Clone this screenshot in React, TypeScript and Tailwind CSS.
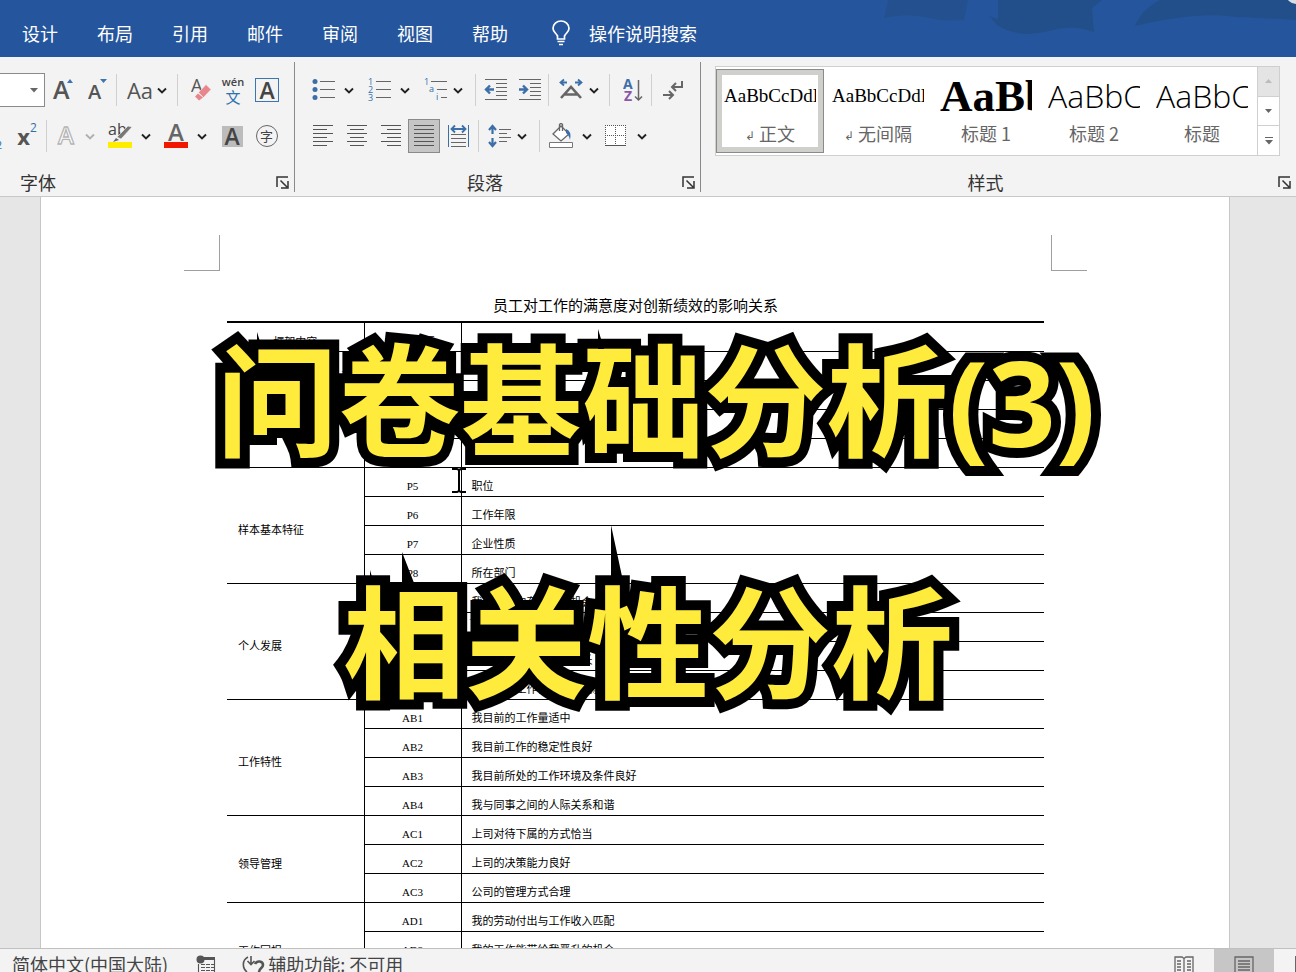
import React from "react";

const TABS = ["设计", "布局", "引用", "邮件", "审阅", "视图", "帮助"];

type Group = { label: string; rows: [string, string][] };

const GROUPS: Group[] = [
  { label: "", rows: [["", ""], ["", ""], ["", ""], ["", ""]] },
  {
    label: "样本基本特征",
    rows: [["P5", "职位"], ["P6", "工作年限"], ["P7", "企业性质"], ["P8", "所在部门"]],
  },
  {
    label: "个人发展",
    rows: [
      ["", "我在工作中有发展的机会"],
      ["", "我在工作中能不断学习"],
      ["", "我在工作中可以发挥所长"],
      ["", "我目前的工作让我很有成就感"],
    ],
  },
  {
    label: "工作特性",
    rows: [
      ["AB1", "我目前的工作量适中"],
      ["AB2", "我目前工作的稳定性良好"],
      ["AB3", "我目前所处的工作环境及条件良好"],
      ["AB4", "我与同事之间的人际关系和谐"],
    ],
  },
  {
    label: "领导管理",
    rows: [["AC1", "上司对待下属的方式恰当"], ["AC2", "上司的决策能力良好"], ["AC3", "公司的管理方式合理"]],
  },
  {
    label: "工作回报",
    rows: [["AD1", "我的劳动付出与工作收入匹配"], ["AD2", "我的工作能带给我晋升的机会"], ["AD3", "我对目前的福利待遇满意"]],
  },
];

function Chevron({ faint = false }: { faint?: boolean }) {
  return (
    <svg width="10" height="8" viewBox="0 0 10 8" fill="none" stroke={faint ? "#b0b0b0" : "#222"} strokeWidth="1.9" className="shrink-0">
      <path d="M1 2.500 5 6.500 9 2.500" />
    </svg>
  );
}

function Tool({
  label,
  width,
  className = "",
  children,
}: {
  label: string;
  width: string;
  className?: string;
  children: React.ReactNode;
}) {
  return (
    <button type="button" aria-label={label} className={`flex h-[34px] shrink-0 items-center justify-center ${width} ${className}`}>
      {children}
    </button>
  );
}

function Sep({ className = "" }: { className?: string }) {
  return <span className={`h-8 w-px shrink-0 bg-[#d0d0d0] ${className}`} />;
}

function Lines({ rows }: { rows: [number, number][] }) {
  return (
    <svg width="22" height="24" viewBox="0 0 22 24" stroke="#555" strokeWidth="1" shapeRendering="crispEdges">
      {rows.map(([a, b], i) => (
        <path key={i} d={`M${a} ${1.5 + i * 4}H${b}`} />
      ))}
    </svg>
  );
}

function Launcher() {
  return (
    <button type="button" aria-label="更多选项" className="flex h-4 w-4 items-center justify-center">
      <svg width="13" height="13" viewBox="0 0 13 13" fill="none" stroke="#333" strokeWidth="1.5">
        <path d="M1 11V1h11M4.500 4.500l6.500 6.500M12 5v7H5" />
      </svg>
    </button>
  );
}

function GroupFooter({ name, className = "" }: { name: string; className?: string }) {
  return (
    <div className="flex h-5 items-center">
      <span className={`flex-1 text-lg leading-7 text-[#333] ${className}`}>{name}</span>
      <Launcher />
    </div>
  );
}

function FontGroup() {
  return (
    <section className="flex w-[295px] shrink-0 flex-col border-r border-[#8a8a8a] pr-1">
      <div className="mt-[11px] flex h-[34px] items-center">
        <button type="button" aria-label="字号" className="flex h-[34px] w-[45px] items-center justify-end border border-l-0 border-[#8a8a8a] bg-white pr-[6px]">
          <svg width="8" height="5" viewBox="0 0 8 5"><path d="M0 0h8L4 4.500z" fill="#666" /></svg>
        </button>
        <Tool label="增大字号" width="w-[36px]">
          <svg width="22" height="26" viewBox="0 0 22 26">
            <text x="1" y="22" fontSize="25" fontFamily="Open Sans, sans-serif" fontWeight="600" fill="#555">A</text>
            <path d="M15 6h6l-3-4z" fill="#3c76ae" />
          </svg>
        </Tool>
        <Tool label="减小字号" width="w-[35px]">
          <svg width="22" height="26" viewBox="0 0 22 26">
            <text x="0" y="22" fontSize="20" fontFamily="Open Sans, sans-serif" fontWeight="600" fill="#555">A</text>
            <path d="M12 2h7l-3.500 4z" fill="#3c76ae" />
          </svg>
        </Tool>
        <Sep />
        <Tool label="更改大小写" width="w-[60px]" className="gap-1">
          <span className="font-['Open_Sans'] text-[22px] leading-[30px] text-[#555]">Aa</span>
          <Chevron />
        </Tool>
        <Sep />
        <Tool label="清除格式" width="w-[42px]" className="pl-1">
          <svg width="20" height="24" viewBox="0 0 20 24">
            <text x="0" y="14" fontSize="18" fontFamily="Open Sans, sans-serif" fill="#555">A</text>
            <path d="m7.500 14.500 7.500-8 5 5-7.500 8z" fill="#e8868d" stroke="#f3f3f3" strokeWidth=".6" />
            <path d="m7 15.500-3 3 4 4 4-3z" fill="#e8868d" />
          </svg>
        </Tool>
        <Tool label="拼音指南" width="w-[26px]" className="flex-col">
          <span className="font-['Open_Sans'] text-[11px] font-semibold leading-[14px] text-[#444]">wén</span>
          <span className="text-[15px] leading-4 text-[#2f71ad]">文</span>
        </Tool>
        <Tool label="字符边框" width="w-[42px]">
          <span className="flex h-6 w-6 items-center justify-center border border-[#3c76ae] font-['Open_Sans'] text-[23px] font-semibold leading-[30px] text-[#444]">A</span>
        </Tool>
      </div>
      <div className="mt-3 flex h-[34px] items-center">
        <Tool label="上标" width="w-[46px]" className="relative">
          <span className="absolute -left-1 top-[17px] text-[11px] leading-4 text-[#2f71ad]">2</span>
          <span className="pl-2 font-['Open_Sans'] text-[22px] font-bold leading-7 text-[#555]">x</span>
          <span className="pb-4 font-['Open_Sans'] text-xs leading-4 text-[#2f71ad]">2</span>
        </Tool>
        <Sep />
        <Tool label="文本效果" width="w-[52px]" className="gap-2 pl-1">
          <svg width="22" height="24" viewBox="0 0 22 24">
            <text x="3" y="20" fontSize="24" fontFamily="Open Sans, sans-serif" fontWeight="600" fill="#fff" stroke="#b5b5b5" strokeWidth="1.300">A</text>
          </svg>
          <Chevron faint />
        </Tool>
        <Tool label="突出显示颜色" width="w-[56px]" className="gap-2 pl-1">
          <svg width="26" height="28" viewBox="0 0 26 28">
            <text x="1" y="13" fontSize="16" fontFamily="Open Sans, sans-serif" fill="#444">ab</text>
            <path d="m10 15 11-11 4 1-11 12z" fill="#777" stroke="#f3f3f3" strokeWidth=".6" />
            <path d="m9 16 3 2-6 2z" fill="#666" />
            <path d="M1 20h24v6H1z" fill="#ffed00" />
          </svg>
          <Chevron />
        </Tool>
        <Tool label="字体颜色" width="w-[56px]" className="gap-2 pl-1">
          <svg width="26" height="28" viewBox="0 0 26 28">
            <text x="5" y="19" fontSize="24" fontFamily="Open Sans, sans-serif" fontWeight="600" fill="#666">A</text>
            <path d="M1 20h24v6H1z" fill="#f01800" />
          </svg>
          <Chevron />
        </Tool>
        <Tool label="字符底纹" width="w-[42px]">
          <span className="flex h-[21px] w-[21px] items-center justify-center bg-[#bcbcbc] font-['Open_Sans'] text-[23px] font-semibold leading-[30px] text-[#444]">A</span>
        </Tool>
        <Tool label="带圈字符" width="w-[27px]">
          <span className="flex h-[22px] w-[22px] shrink-0 items-center justify-center rounded-full border border-[#666] text-[13px] leading-5 text-[#444]">字</span>
        </Tool>
      </div>
      <div className="mt-[19px]"><GroupFooter name="字体" className="pl-5" /></div>
    </section>
  );
}

function ParagraphGroup() {
  return (
    <section className="flex w-[406px] shrink-0 flex-col border-r border-[#8a8a8a] pr-1">
      <div className="mt-[11px] flex h-[34px] items-center pl-4">
        <Tool label="项目符号" width="w-[44px]" className="gap-[9px]">
          <svg width="23" height="24" viewBox="0 0 23 24" className="shrink-0">
            {[3, 11, 19].map((y) => (
              <g key={y}><circle cx="3" cy={y + 0.5} r="2.500" fill="#3c6fa8" /><path d={`M8 ${y + 0.5}h15`} stroke="#666" /></g>
            ))}
          </svg>
          <Chevron />
        </Tool>
        <Tool label="编号" width="w-[56px]" className="gap-[9px] pl-3">
          <svg width="23" height="24" viewBox="0 0 23 24" className="shrink-0">
            {[3, 11, 19].map((y, i) => (
              <g key={y}><text x="0" y={y + 4} fontSize="9" fontFamily="Open Sans, sans-serif" fill="#2f71ad">{i + 1}</text><path d={`M8 ${y + 0.5}h15`} stroke="#666" /></g>
            ))}
          </svg>
          <Chevron />
        </Tool>
        <Tool label="多级列表" width="w-[52px]" className="gap-[5px] pl-3">
          <svg width="24" height="24" viewBox="0 0 24 24" className="shrink-0" fill="#2f71ad" fontSize="9" fontFamily="Open Sans, sans-serif">
            <text x="0" y="7">1</text><text x="5" y="14">a</text><text x="12" y="22">i</text>
            <path d="M7 3.500h16M13 11.500h10M17 19.500h6" stroke="#666" />
          </svg>
          <Chevron />
        </Tool>
        <Sep className="ml-3" />
        <Tool label="减少缩进" width="w-[38px]">
          <svg width="23" height="24" viewBox="0 0 23 24" fill="none" stroke="#666">
            <path d="M1 1.500h22M12 5.500h11M12 9.500h11M12 13.500h11M12 17.500h11M1 21.500h22" />
            <path d="M10 11.500H2.500M6 7.500l-4 4 4 4" stroke="#3c6fa8" strokeWidth="2.400" />
          </svg>
        </Tool>
        <Tool label="增加缩进" width="w-[30px]">
          <svg width="23" height="24" viewBox="0 0 23 24" fill="none" stroke="#666">
            <path d="M1 1.500h22M12 5.500h11M12 9.500h11M12 13.500h11M12 17.500h11M1 21.500h22" />
            <path d="M1 11.500h7.500M5 7.500l4 4-4 4" stroke="#3c6fa8" strokeWidth="2.400" />
          </svg>
        </Tool>
        <Sep className="ml-1" />
        <Tool label="中文版式" width="w-[56px]" className="gap-[6px] pl-1">
          <svg width="24" height="24" viewBox="0 0 24 24" fill="none">
            <path d="M8 4.500H2M5 1.500l-3.500 3 3.500 3M16 4.500h6M19 1.500l3.500 3-3.500 3" stroke="#3c6fa8" strokeWidth="1.800" />
            <path d="M2 20 12 9l10 11M6 16.500h12" stroke="#666" strokeWidth="2.600" />
          </svg>
          <Chevron />
        </Tool>
        <Sep className="ml-1" />
        <Tool label="排序" width="w-[41px]" className="pl-1">
          <svg width="20" height="26" viewBox="0 0 20 26" fill="none">
            <text x="0" y="12" fontSize="14" fontWeight="700" fontFamily="Open Sans, sans-serif" fill="#3c6fa8">A</text>
            <text x="1" y="24" fontSize="14" fontWeight="700" fontFamily="Open Sans, sans-serif" fill="#8a57a8">Z</text>
            <path d="M15.500 3v20M12 19.500l3.500 3.500 3.500-3.500" stroke="#666" strokeWidth="1.500" />
          </svg>
        </Tool>
        <Sep />
        <Tool label="显示编辑标记" width="w-[42px]">
          <svg width="22" height="22" viewBox="0 0 22 22" fill="none" stroke="#666" strokeWidth="2">
            <path d="M20 2v6h-9M14 4l-4 4 4 4M1 16h9M7 12l4 4-4 4" />
          </svg>
        </Tool>
      </div>
      <div className="mt-3 flex h-[34px] items-center pl-[11px]">
        <Tool label="左对齐" width="w-[34px]"><Lines rows={[[1, 21], [1, 15], [1, 21], [1, 15], [1, 21], [1, 15]]} /></Tool>
        <Tool label="居中" width="w-[34px]"><Lines rows={[[1, 21], [4, 18], [1, 21], [4, 18], [1, 21], [4, 18]]} /></Tool>
        <Tool label="右对齐" width="w-[34px]"><Lines rows={[[1, 21], [7, 21], [1, 21], [7, 21], [1, 21], [7, 21]]} /></Tool>
        <Tool label="两端对齐" width="w-[32px]" className="border border-[#8a8a8a] bg-[#c6c6c6]"><Lines rows={[[1, 21], [1, 21], [1, 21], [1, 21], [1, 21], [1, 21]]} /></Tool>
        <Tool label="分散对齐" width="w-[36px]">
          <svg width="23" height="24" viewBox="0 0 23 24" fill="none">
            <path d="M1.500 1v22M21.500 1v22" stroke="#3c6fa8" />
            <path d="M5 5h13M8 1.500 4.500 5 8 8.500M15 1.500 18.500 5 15 8.500" stroke="#3c6fa8" strokeWidth="1.800" />
            <path d="M4 10.500h15M4 14.500h15M4 18.500h15M4 22.500h15" stroke="#666" />
          </svg>
        </Tool>
        <Sep className="ml-[2px]" />
        <Tool label="行距" width="w-[52px]" className="gap-[6px] pl-1">
          <svg width="24" height="24" viewBox="0 0 24 24" fill="none" className="shrink-0">
            <path d="M5.500 3v7M5.500 14v7M2 6l3.500-4L9 6M2 18l3.500 4L9 18" stroke="#3c6fa8" strokeWidth="2.200" />
            <path d="M12 5.500h12M12 9.500h8M12 13.500h12M12 17.500h8" stroke="#666" />
          </svg>
          <Chevron />
        </Tool>
        <Sep className="ml-2" />
        <Tool label="底纹" width="w-[56px]" className="gap-2 pl-1">
          <svg width="26" height="26" viewBox="0 0 26 26" fill="none" className="shrink-0">
            <path d="m5 11 8-8 8 8-8 7z" fill="#fff" stroke="#666" strokeWidth="1.300" />
            <path d="M11.500 8V1.500q1.500-2 3 0V8" stroke="#666" strokeWidth="1.300" />
            <path d="M18 6q6 2 4 11-1-5-4-7z" fill="#3c6fa8" />
            <path d="M1.500 19.500h23v5h-23z" fill="#fff" stroke="#777" />
          </svg>
          <Chevron />
        </Tool>
        <Tool label="边框" width="w-[56px]" className="gap-[10px] pl-1">
          <svg width="22" height="24" viewBox="0 0 22 24" fill="#fff" stroke="#555" className="shrink-0">
            <path d="M.5 1.500h20v20H.5z" stroke="none" />
            <path d="M0 1.500h21M0 11.500h21M.5 1v20M10.500 1v20M20.500 1v20" strokeDasharray="1 1" shapeRendering="crispEdges" />
            <path d="M0 21.500h21" />
          </svg>
          <Chevron />
        </Tool>
      </div>
      <div className="mt-[19px]"><GroupFooter name="段落" className="pl-[10px] pr-[15px] text-center" /></div>
    </section>
  );
}

function Style({
  sample,
  name,
  sampleClass,
  paragraph = false,
  selected = false,
}: {
  sample: string;
  name: string;
  sampleClass: string;
  paragraph?: boolean;
  selected?: boolean;
}) {
  return (
    <button
      type="button"
      className={`my-[2px] flex h-[84px] w-[108px] shrink-0 flex-col items-center ${selected ? "border border-[#8a8a8a] bg-white ring-5 ring-inset ring-[#cfcfcb]" : "border border-white"}`}
    >
      <span className={`mt-1 flex h-11 w-[92px] items-center overflow-hidden whitespace-nowrap leading-[44px] text-black ${sampleClass}`}>{sample}</span>
      <span className="mt-[2px] flex items-center gap-1 text-lg leading-[26px] text-[#666]">
        {paragraph && <span className="pt-1 text-xs leading-5">↲</span>}
        {name}
      </span>
    </button>
  );
}

function StylesGroup() {
  return (
    <section className="flex min-w-0 flex-1 flex-col pl-[14px]">
      <div className="mr-4 mt-1 flex h-[90px] border border-[#cfcfcf] bg-white">
        <div className="flex min-w-0 flex-1 overflow-hidden">
          <Style sample="AaBbCcDdEe" name="正文" sampleClass="font-['Liberation_Serif'] text-[19px]" paragraph selected />
          <Style sample="AaBbCcDdEe" name="无间隔" sampleClass="font-['Liberation_Serif'] text-[19px]" paragraph />
          <Style sample="AaBb" name="标题 1" sampleClass="font-['Liberation_Serif'] text-[45px] font-bold" />
          <Style sample="AaBbC" name="标题 2" sampleClass="font-['Open_Sans'] text-[32px] font-light" />
          <Style sample="AaBbC" name="标题" sampleClass="font-['Open_Sans'] text-[32px] font-light" />
        </div>
        <div className="flex w-[22px] shrink-0 flex-col divide-y divide-[#cfcfcf] border-l border-[#cfcfcf]">
          <button type="button" aria-label="上一行" className="flex flex-1 items-center justify-center bg-[#e4e4e4]">
            <svg width="7" height="5" viewBox="0 0 7 5"><path d="M0 4h7L3.500 0z" fill="#bbb" /></svg>
          </button>
          <button type="button" aria-label="下一行" className="flex flex-1 items-center justify-center">
            <svg width="7" height="5" viewBox="0 0 7 5"><path d="M0 0h7L3.500 4z" fill="#666" /></svg>
          </button>
          <button type="button" aria-label="其他" className="flex flex-1 items-center justify-center">
            <svg width="8" height="8" viewBox="0 0 8 8"><path d="M0 0h8v1H0zM0 3h8L4 7.500z" fill="#666" /></svg>
          </button>
        </div>
      </div>
      <div className="mt-4 pr-1"><GroupFooter name="样式" className="pl-1 pr-6 text-center" /></div>
    </section>
  );
}

function Ribbon() {
  return (
    <div className="flex shrink-0 border-b border-[#c8c8c8] bg-[#f3f3f3] pb-1 pt-[5px]">
      <FontGroup />
      <ParagraphGroup />
      <StylesGroup />
    </div>
  );
}

function Survey() {
  const code = "border-x border-b border-black pt-2 text-center font-['Liberation_Serif'] leading-4";
  const text = "border-b border-black pl-[10px] pt-[6px] leading-4";
  return (
    <table className="w-full table-fixed border-collapse border-t-2 border-black text-[11px] text-black">
      <colgroup>
        <col className="w-[137px]" />
        <col className="w-[97px]" />
        <col />
      </colgroup>
      <thead>
        <tr className="h-[29px]">
          <th className="border-b border-black pt-2 font-normal leading-4">框架内容</th>
          <th className="border-x border-b border-black pt-2 font-normal leading-4">测量题项</th>
          <th className="border-b border-black" />
        </tr>
      </thead>
      <tbody>
        {GROUPS.map((group, g) =>
          group.rows.map(([id, content], i) => (
            <tr key={`${g}-${i}`} className="h-[29px]">
              {i === 0 && (
                <td rowSpan={group.rows.length} className="border-b border-black pl-[11px] pt-[8px] leading-4">
                  {group.label}
                </td>
              )}
              <td className={code}>{id}</td>
              <td className={text}>{content}</td>
            </tr>
          )),
        )}
      </tbody>
    </table>
  );
}

function Caption() {
  return (
    <div className="pointer-events-none absolute inset-x-0 top-[273px] text-center text-[122px] font-bold leading-[242px] text-[#ffeb3b] [-webkit-text-stroke:20px_black] [paint-order:stroke_fill]">
      <p className="pl-4">
        问卷基础分析<span className="font-['Open_Sans'] text-[118px] font-bold leading-none">(3)</span>
      </p>
      <p>相关性分析</p>
      {/* Sharp tips that rise from the outline of the letters */}
      <svg className="absolute left-1/2 top-[51px] -translate-x-1/2" width="800" height="280" viewBox="0 0 800 280">
        <path d="M9 8l5 16H9zM350 5l6 20h-6zM154 228l14 36h-14zM363 201l12 56h-12zM122 246l4 14h-4z" fill="#000" />
      </svg>
    </div>
  );
}

export default function App() {
  return (
    <div className="relative flex h-screen flex-col overflow-hidden bg-[#e6e6e6] font-['Noto_Sans_CJK_SC',sans-serif]">
      <header className="relative flex h-[57px] shrink-0 items-center bg-[#25569d] pt-2 text-lg text-white">
        <svg className="absolute right-0 top-0" width="440" height="57" viewBox="0 0 440 57">
          <path d="M32 0h80l-4 20q-20 2-40-3-20-4-40 1z" fill="#25508f" />
          <path d="M142 0h104l-10 8 2 24q-22-8-45-1-30 8-52-6l-8-9 9 3z" fill="#224f8a" />
          <path d="M304 0h136v20q-35-2-60-3-38-6-101 9 6-16 25-26z" fill="#224f8a" />
          <circle cx="440" cy="-6" r="10" fill="#d9dde3" />
        </svg>
        <nav className="relative flex gap-[39px] pl-[22px]">
          {TABS.map((t) => (
            <a key={t} href="#" className="whitespace-nowrap">{t}</a>
          ))}
        </nav>
        <a href="#" className="relative ml-[43px] flex items-center gap-[18px]">
          <svg width="20" height="26" viewBox="0 0 20 26" fill="none" stroke="#fff" strokeWidth="1.700">
            <path d="M6.500 19v-3C5 13 2 11.500 2 8.500a8 7.500 0 0 1 16 0c0 3-3 4.500-4.500 7.500v3zM6.500 21.500h7M8 24.500h4" />
          </svg>
          操作说明搜索
        </a>
      </header>
      <Ribbon />
      <main className="flex min-h-0 flex-1 overflow-hidden">
        <article className="ml-10 mr-[66px] flex-1 border-x border-[#c6c6c6] bg-white">
          <div className="mt-[38px] flex justify-between pl-[143px] pr-[142px]">
            <span className="h-9 w-9 border-b border-r border-[#a0a0a0]" />
            <span className="h-9 w-9 border-b border-l border-[#a0a0a0]" />
          </div>
          <div className="pl-[186px] pr-[185px] pt-[23px]">
            <h1 className="mb-[5px] text-center text-[15px] leading-[22px] text-black">员工对工作的满意度对创新绩效的影响关系</h1>
            <Survey />
          </div>
        </article>
      </main>
      <footer className="flex h-6 shrink-0 items-start overflow-hidden border-t border-[#c0c0c0] bg-[#f3f3f3] text-lg leading-[30px] text-[#444]">
        <span className="pl-3">简体中文(中国大陆)</span>
        <svg className="ml-7 mt-[6px]" width="22" height="22" viewBox="0 0 22 22" fill="#555">
          <path d="M7 2h12v3H7z" /><circle cx="4.500" cy="4.500" r="4" />
          <path d="M5 9.500h4M10 9.500h4M15 9.500h3M5 12.500h4M10 12.500h4M15 12.500h3M5 15.500h4M10 15.500h4M15 15.500h3M18.500 4v18M2.500 9v12" stroke="#555" strokeWidth="1.100" />
        </svg>
        <svg className="ml-6 mt-[6px]" width="24" height="24" viewBox="0 0 24 24" fill="none" stroke="#555" strokeWidth="1.600">
          <path d="M9 1v8M5.500 6 9 9.500 12.500 6M6 2C0 5 0 13 5 17" />
          <path d="M13 9c2-4 8-3 8 1 0 3-4 3-4 7" strokeWidth="2.600" />
        </svg>
        <span className="pl-[2px]">辅助功能: 不可用</span>
        <div className="ml-auto flex h-full">
          <button type="button" aria-label="阅读视图" className="flex w-[60px] justify-center pt-[7px]">
            <svg width="20" height="20" viewBox="0 0 20 20" fill="none" stroke="#666" strokeWidth="1.300">
              <path d="M1 1h7l2 1.500L12 1h7v16h-7l-2 1.500L8 17H1zM10 2v16M3 5h4M3 8h4M3 11h4M3 14h4M13 5h4M13 8h4M13 11h4M13 14h4" />
            </svg>
          </button>
          <button type="button" aria-label="页面视图" className="flex w-[60px] justify-center bg-[#c6c6c6] pt-[7px]">
            <svg width="20" height="20" viewBox="0 0 20 20" fill="none" stroke="#666" strokeWidth="1.300">
              <path d="M1 1h18v20H1zM4 5h12M4 8h12M4 11h12M4 14h12" />
            </svg>
          </button>
          <button type="button" aria-label="Web 版式视图" className="flex w-[22px] justify-end pt-[7px]">
            <span className="h-5 w-px bg-[#666]" />
          </button>
        </div>
      </footer>
      <Caption />
      <svg className="absolute left-[451px] top-[467px]" width="16" height="27" viewBox="0 0 16 27" fill="none" stroke="#000" strokeWidth="2">
        <path d="M1 2h5l2 1 2-1h5M1 25h5l2-1 2 1h5M8 3v21" />
      </svg>
    </div>
  );
}
